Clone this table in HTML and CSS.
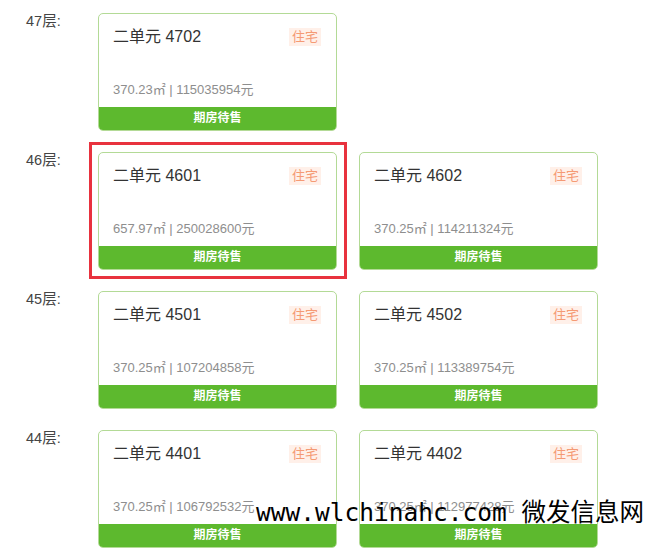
FILE: index.html
```html
<!DOCTYPE html>
<html lang="zh-CN">
<head>
  <meta charset="UTF-8">
  <meta name="viewport" content="width=device-width, initial-scale=1.0">
  <title>楼层房源</title>
  <link rel="stylesheet" href="styles.css">
</head>
<body>
  <div class="floors">
    <div class="floor">
      <div class="floor-name">47层:</div>
      <div class="rooms">
        <div class="room">
          <div class="room-head"><span class="room-no">二单元 4702</span><span class="tag">住宅</span></div>
          <div class="room-info">370.23㎡ | 115035954元</div>
          <div class="room-status">期房待售</div>
        </div>
      </div>
    </div>

    <div class="floor">
      <div class="floor-name">46层:</div>
      <div class="rooms">
        <div class="room marked">
          <div class="room-head"><span class="room-no">二单元 4601</span><span class="tag">住宅</span></div>
          <div class="room-info">657.97㎡ | 250028600元</div>
          <div class="room-status">期房待售</div>
        </div>
        <div class="room">
          <div class="room-head"><span class="room-no">二单元 4602</span><span class="tag">住宅</span></div>
          <div class="room-info">370.25㎡ | 114211324元</div>
          <div class="room-status">期房待售</div>
        </div>
      </div>
    </div>

    <div class="floor">
      <div class="floor-name">45层:</div>
      <div class="rooms">
        <div class="room">
          <div class="room-head"><span class="room-no">二单元 4501</span><span class="tag">住宅</span></div>
          <div class="room-info">370.25㎡ | 107204858元</div>
          <div class="room-status">期房待售</div>
        </div>
        <div class="room">
          <div class="room-head"><span class="room-no">二单元 4502</span><span class="tag">住宅</span></div>
          <div class="room-info">370.25㎡ | 113389754元</div>
          <div class="room-status">期房待售</div>
        </div>
      </div>
    </div>

    <div class="floor">
      <div class="floor-name">44层:</div>
      <div class="rooms">
        <div class="room">
          <div class="room-head"><span class="room-no">二单元 4401</span><span class="tag">住宅</span></div>
          <div class="room-info">370.25㎡ | 106792532元</div>
          <div class="room-status">期房待售</div>
        </div>
        <div class="room">
          <div class="room-head"><span class="room-no">二单元 4402</span><span class="tag">住宅</span></div>
          <div class="room-info">370.25㎡ | 112977428元</div>
          <div class="room-status">期房待售</div>
        </div>
      </div>
    </div>
  </div>

  <div class="watermark">www.wlchinahc.com 微发信息网</div>
</body>
</html>
```

FILE: styles.css
```css
body {
  font-family: "Liberation Sans", "Noto Sans CJK SC", sans-serif;
  background-color: #fff;
  color: #333;
  margin: 0;
  padding: 0;
  overflow: hidden;
}
.floors {
  padding: 13px 0 0 26px;
  display: flex;
  flex-direction: column;
  gap: 21px;
}
.floor {
  display: flex;
}
.floor-name {
  width: 72px;
  font-size: 14.5px;
  line-height: 16px;
  color: #444;
}
.rooms {
  display: flex;
  gap: 22px;
}
.room {
  position: relative;
  width: 239px;
  height: 118px;
  box-sizing: border-box;
  border: 1px solid #b3da96;
  border-radius: 5px;
  display: flex;
  flex-direction: column;
}
/* red marker box drawn over the selected room */
.room.marked::after {
  content: "";
  position: absolute;
  left: -10px;
  top: -11px;
  right: -11px;
  bottom: -10px;
  border: 3px solid #e8323e;
}
.room-head {
  display: flex;
  justify-content: space-between;
  align-items: center;
  padding: 12px 15px 0 14px;
}
.room-no {
  font-size: 16px;
  line-height: 22px;
  color: #333;
}
.tag {
  font-size: 13px;
  line-height: 18px;
  padding: 0 3px;
  color: #f59a74;
  background: #fff0e9;
}
.room-info {
  margin-top: auto;
  padding: 0 14px 8px;
  font-size: 13px;
  line-height: 18px;
  color: #8e8e8e;
}
.room-status {
  height: 23px;
  line-height: 23px;
  text-align: center;
  background: #5db92e;
  color: #fff;
  font-size: 12px;
  font-weight: bold;
  border-radius: 0 0 4px 4px;
}
.watermark {
  position: absolute;
  left: 256px;
  top: 496px;
  font-family: "DejaVu Sans Mono", "Noto Sans CJK SC", monospace;
  font-size: 24.5px;
  line-height: 34px;
  color: #000;
  white-space: nowrap;
}
```
